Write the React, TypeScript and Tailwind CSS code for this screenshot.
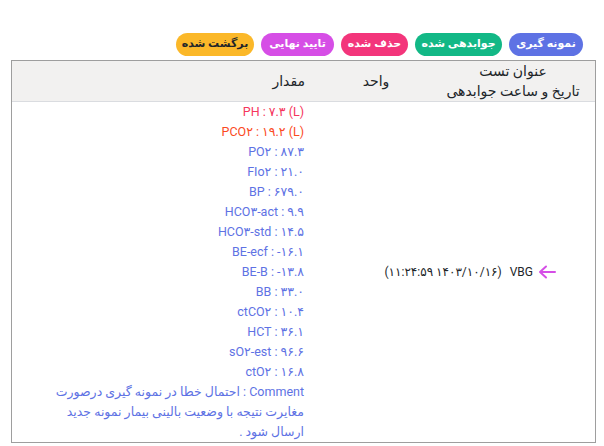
const statuses = [
  { label: "نمونه گیری", cls: "bg-[#5e72e4] text-white w-[74px]" },
  { label: "جوابدهی شده", cls: "bg-[#12b886] text-white w-[87px]" },
  { label: "حذف شده", cls: "bg-[#f3357b] text-white w-[67px]" },
  { label: "تایید نهایی", cls: "bg-[#d64ee6] text-white w-[73px]" },
  { label: "برگشت شده", cls: "bg-[#fbb829] text-[#212529] w-[78px]" },
];

const results = [
  { text: "PH : ۷.۳ (L)", cls: "text-[#f5365c]" },
  { text: "PCO۲ : ۱۹.۲ (L)", cls: "text-[#fb4a1e]" },
  { text: "PO۲ : ۸۷.۳" },
  { text: "FIo۲ : ۲۱.۰" },
  { text: "BP : ۶۷۹.۰" },
  { text: "HCO۳-act : ۹.۹" },
  { text: "HCO۳-std : ۱۴.۵" },
  { text: "BE-ecf : -۱۶.۱" },
  { text: "BE-B : -۱۳.۸" },
  { text: "BB : ۳۳.۰" },
  { text: "ctCO۲ : ۱۰.۴" },
  { text: "HCT : ۳۶.۱" },
  { text: "sO۲-est : ۹۶.۶" },
  { text: "ctO۲ : ۱۶.۸" },
];

function ArrowIcon() {
  return (
    <svg width="18" height="14" viewBox="0 0 18 14" fill="none">
      <path
        d="M17 7H2M8 1.5L2 7l6 5.5"
        stroke="#d54ee6"
        strokeWidth="2"
        strokeLinecap="round"
        strokeLinejoin="round"
      />
    </svg>
  );
}

export default function App() {
  return (
    <div
      dir="rtl"
      className="w-[604px] h-[446px] bg-white pt-[33px] pr-[8px] pl-[11px] text-[#212529]"
      style={{ fontFamily: 'Roboto, "DejaVu Sans", sans-serif' }}
    >
      {/* status legend */}
      <div className="flex gap-[7px] pr-[13px]">
        {statuses.map((s) => (
          <span
            key={s.label}
            className={`h-[23px] rounded-full flex items-center justify-center text-[11px] font-bold ${s.cls}`}
          >
            {s.label}
          </span>
        ))}
      </div>

      {/* result table */}
      <div className="mt-[4px] border border-[#9e9e9e]">
        <div className="grid grid-cols-[164px_96px_1fr] h-[41px] bg-[#f2f1f0] border-b border-[#dadce0] text-[14px] leading-[20px]">
          <div className="flex flex-col items-center justify-center">
            <span>عنوان تست</span>
            <span>تاریخ و ساعت جوابدهی</span>
          </div>
          <div className="flex items-center justify-center pr-[14px]">واحد</div>
          <div className="flex items-center pr-[30px]">مقدار</div>
        </div>

        <div className="grid grid-cols-[260px_1fr] h-[340px] text-[12.5px] leading-[20px]">
          <div className="flex items-center gap-[5px] pr-[39px] whitespace-nowrap text-[12px]">
            <ArrowIcon />
            <span>VBG</span>
            <span dir="ltr" className="mr-[3px]">(۱۱:۲۴:۵۹ ۱۴۰۳/۱۰/۱۶)</span>
          </div>
          <div className="pr-[31px] text-[#5e72e4]">
            {results.map((r) => (
              <div key={r.text} className={`text-right ${r.cls ?? ""}`}>
                <span dir="ltr">{r.text}</span>
              </div>
            ))}
            <div>
              Comment : احتمال خطا در نمونه گیری درصورت
              <br />
              مغایرت نتیجه با وضعیت بالینی بیمار نمونه جدید
              <br />
              ارسال شود .
            </div>
          </div>
        </div>
      </div>
    </div>
  );
}
